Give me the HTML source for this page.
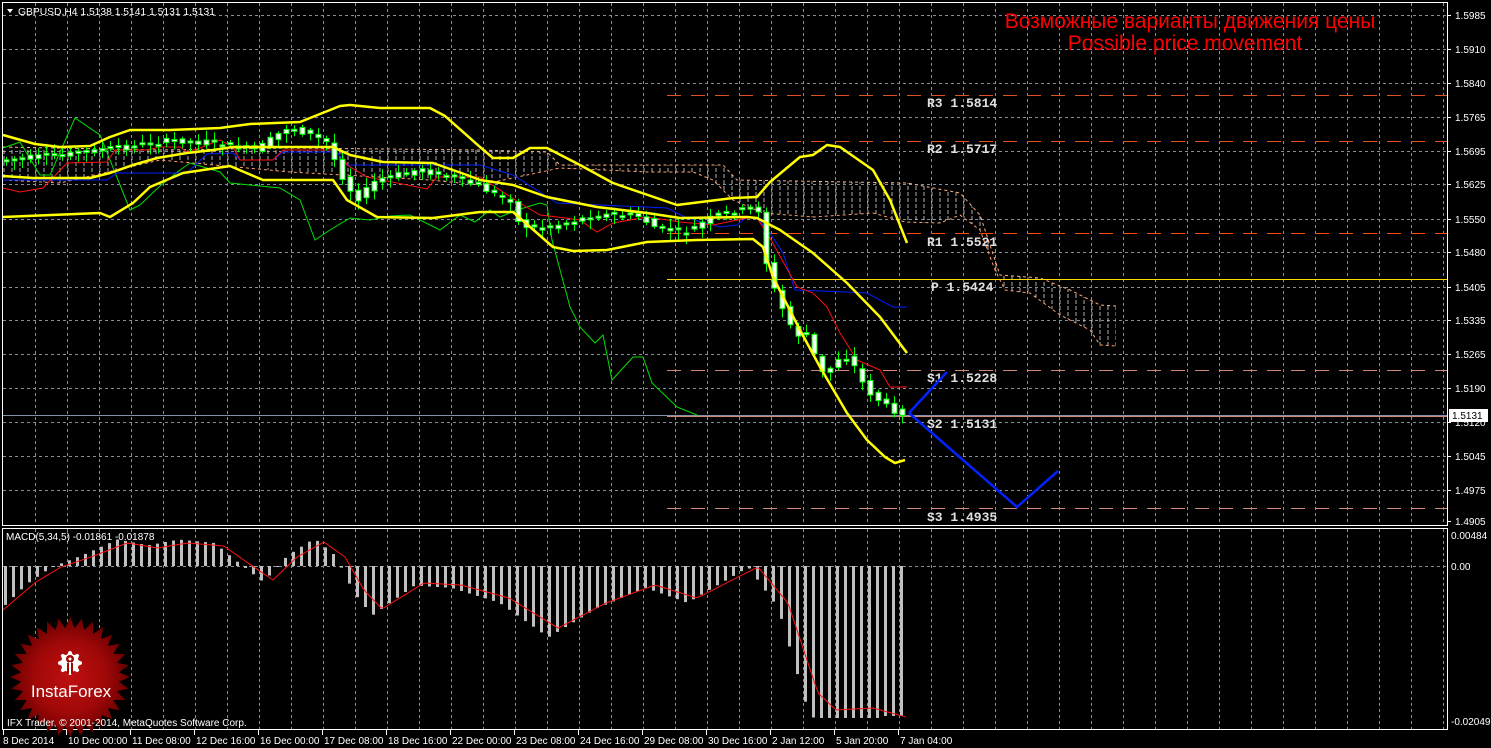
<!DOCTYPE html>
<html><head><meta charset="utf-8"><style>
html,body{margin:0;padding:0;background:#000;width:1491px;height:748px;overflow:hidden}
svg{display:block}
text{font-family:"Liberation Sans",sans-serif}
</style></head><body>
<svg id="s" width="1491" height="748" xmlns="http://www.w3.org/2000/svg">
<defs>
<pattern id="hatch" width="8" height="6" patternUnits="userSpaceOnUse"><line x1="4" y1="0" x2="4" y2="4" stroke="#ddd" stroke-width="1"/></pattern>
<radialGradient id="rg" cx="50%" cy="50%" r="50%"><stop offset="0" stop-color="#c01010"/><stop offset="0.6" stop-color="#a00808"/><stop offset="1" stop-color="#6a0000"/></radialGradient>
</defs>
<rect width="1491" height="748" fill="#000"/>
<g id="grid" stroke="#8090a0" stroke-width="1" stroke-dasharray="3,3"></g>
<g stroke="#fff" stroke-width="1" fill="none">
<rect x="2.5" y="2.5" width="1445" height="523"/>
<rect x="2.5" y="528.5" width="1445" height="201"/>
</g>
<polygon points="3,147 160,150 290,148 480,150 547,152 560,165 723,165 737,180 907,183 960,193 980,215 1000,275 1040,278 1070,290 1100,305 1116,306 1116,346 1100,345 1090,330 1060,315 1030,293 1005,290 995,270 980,230 960,215 940,223 905,222 873,213 813,217 763,213 733,200 713,180 693,172 647,172 560,168 480,185 430,180 290,172 160,160 60,183 3,180" fill="url(#hatch)" opacity="0.8"/>
<polyline points="3,147 160,150 290,148 480,150 547,152 560,165 723,165 737,180 907,183 960,193 980,215 1000,275 1040,278 1070,290 1100,305 1116,306" fill="none" stroke="#ffb080" stroke-width="1" stroke-dasharray="3,3"/>
<polyline points="3,180 60,183 160,160 290,172 430,180 480,185 560,168 647,172 693,172 713,180 733,200 763,213 813,217 873,213 905,222 940,223 960,215 980,230 995,270 1005,290 1030,293 1060,315 1090,330 1100,345 1116,346" fill="none" stroke="#ffa070" stroke-width="1" stroke-dasharray="3,3"/>
<g stroke-width="1" fill="none">
<line x1="667" y1="95.5" x2="1447" y2="95.5" stroke="#e05020" stroke-dasharray="14,10"/>
<line x1="667" y1="141.5" x2="1447" y2="141.5" stroke="#e05020" stroke-dasharray="14,10"/>
<line x1="667" y1="233.5" x2="1447" y2="233.5" stroke="#ff4a10" stroke-dasharray="14,10"/>
<line x1="667" y1="279.5" x2="1447" y2="279.5" stroke="#ffd800"/>
<line x1="667" y1="370.5" x2="1447" y2="370.5" stroke="#d08878" stroke-dasharray="14,10"/>
<line x1="3" y1="415.5" x2="1447" y2="415.5" stroke="#8090a8"/>
<line x1="667" y1="416.5" x2="1447" y2="416.5" stroke="#d08878"/>
<line x1="667" y1="508.5" x2="1447" y2="508.5" stroke="#d08878" stroke-dasharray="14,10"/>
</g>
<g font-size="13" font-weight="bold" fill="#e0e0e0">
<text x="927" y="107" style="font-family:'Liberation Mono',monospace">R3 1.5814</text>
<text x="927" y="153" style="font-family:'Liberation Mono',monospace">R2 1.5717</text>
<text x="927" y="246" style="font-family:'Liberation Mono',monospace">R1 1.5521</text>
<text x="931" y="291" style="font-family:'Liberation Mono',monospace">P 1.5424</text>
<text x="927" y="382" style="font-family:'Liberation Mono',monospace">S1 1.5228</text>
<text x="927" y="428" style="font-family:'Liberation Mono',monospace">S2 1.5131</text>
<text x="927" y="521" style="font-family:'Liberation Mono',monospace">S3 1.4935</text>
</g>
<polyline fill="none" stroke="#00e000" stroke-width="1" points="3,148 20,142 40,175 50,175 75,118 100,135 130,210 140,205 160,186 180,170 190,163 220,172 230,183 260,186 280,188 300,200 315,240 330,230 350,218 370,220 390,216 410,215 440,230 460,215 475,222 490,210 500,217 517,210 540,203 547,205 552,240 570,307 580,327 595,343 603,335 612,380 633,357 643,357 652,383 677,407 697,415"/>
<polyline fill="none" stroke="#0020ff" stroke-width="1" points="3,180 107,180 117,173 187,173 207,154 233,153 240,160 273,160 283,152 337,152 347,165 480,165 513,175 557,203 667,208 687,218 720,227 737,225 747,217 757,218 770,233 783,253 795,290 847,292 867,293 893,307 907,307"/>
<polyline fill="none" stroke="#ff1010" stroke-width="1" points="3,188 20,192 43,188 67,163 107,162 115,150 147,150 160,147 180,147 187,152 200,148 220,140 233,147 240,160 273,160 283,150 340,150 347,165 367,177 427,189 437,177 480,177 520,203 540,215 557,217 580,220 597,232 613,223 647,217 680,222 713,225 747,218 757,218 770,238 797,287 813,293 827,307 840,333 857,360 880,370 890,387 907,387"/>
<g id="candles"></g>
<g fill="none" stroke="#ffff00" stroke-width="2.5" stroke-linejoin="round">
<polyline points="3,135 35,144 60,147 90,146 110,137 130,130 170,130 220,128 250,124 300,122 340,106 350,105 380,108 430,108 445,116 480,147 493,158 513,158 530,148 547,148 580,165 613,183 677,205 733,198 757,197 770,182 800,157 813,155 827,145 840,147 873,170 890,200 907,243"/>
<polyline points="3,176 33,178 90,178 110,173 133,165 157,158 187,153 213,150 233,147 333,147 350,155 383,162 433,163 467,175 480,180 513,185 547,197 597,207 647,213 680,218 747,217 757,218 780,230 813,253 847,283 880,317 907,353"/>
<polyline points="3,217 100,213 110,217 133,203 150,187 183,173 230,166 263,180 333,180 347,200 377,217 433,218 480,212 513,212 553,247 573,251 607,250 647,242 697,240 753,239 763,247 773,277 800,330 820,367 847,413 867,440 885,457 895,463 905,460"/>
</g>
<g fill="none" stroke="#0022ff" stroke-width="2.5">
<polyline points="909,413 947,372"/>
<polyline points="909,413 1017,507 1058,471"/>
</g>
<text x="1190" y="28" font-size="21" fill="#ff0000" text-anchor="middle">Возможные варианты движения цены</text>
<text x="1185" y="50" font-size="21" fill="#ff0000" text-anchor="middle">Possible price movement</text>
<polygon points="7,9 13,9 10,13" fill="#fff"/>
<text x="18" y="15" font-size="10.3" fill="#fff">GBPUSD,H4  1.5138 1.5141 1.5131 1.5131</text>
<line x1="3" y1="566.5" x2="1447" y2="566.5" stroke="#8090a0" stroke-dasharray="3,3"/>
<g id="hist"></g>
<polyline id="sig" fill="none" stroke="#ff1010" stroke-width="1" points=""/>
<text x="6" y="540" font-size="10" fill="#fff">MACD(5,34,5) -0.01861 -0.01878</text>
<polygon id="star" fill="url(#rg)" points=""/>
<polygon id="gear" fill="#fff" points=""/>
<g fill="#a00808"><circle cx="70" cy="659" r="4"/><rect x="67" y="663" width="6" height="11"/></g>
<g fill="#fff"><rect x="69" y="662" width="2" height="12"/><circle cx="70" cy="659" r="1.5"/></g>
<text x="71" y="697" font-size="17" fill="#fff" text-anchor="middle">InstaForex</text>
<text x="7" y="726" font-size="10" fill="#fff">IFX Trader, © 2001-2014, MetaQuotes Software Corp.</text>
<g id="yaxis" font-size="10" fill="#fff"></g>
<rect x="1449" y="409" width="39" height="13" fill="#fff"/>
<text x="1452" y="419" font-size="10" fill="#000">1.5131</text>
<g id="xaxis" font-size="10" fill="#fff"></g>
</svg>
<script>
(function(){
var NS="http://www.w3.org/2000/svg";
function el(t,a,p){var e=document.createElementNS(NS,t);for(var k in a)e.setAttribute(k,a[k]);p.appendChild(e);return e;}
var gr=document.getElementById('grid');
for(var x=35.5;x<1447;x+=32){el('line',{x1:x,y1:3,x2:x,y2:525},gr);el('line',{x1:x,y1:529,x2:x,y2:729},gr);}
var ys=[[15,'1.5985'],[49,'1.5910'],[83,'1.5840'],[117,'1.5765'],[151,'1.5695'],[184,'1.5625'],[219,'1.5550'],[252,'1.5480'],[287,'1.5405'],[320,'1.5335'],[354,'1.5265'],[388,'1.5190'],[422,'1.5120'],[456,'1.5045'],[490,'1.4975'],[521,'1.4905']];
var ya=document.getElementById('yaxis');
ys.forEach(function(v){if(v[0]<520)el('line',{x1:3,y1:v[0]+.5,x2:1447,y2:v[0]+.5},gr);el('line',{x1:1447,y1:v[0]+.5,x2:1451,y2:v[0]+.5,stroke:'#fff'},ya);var t=el('text',{x:1455,y:v[0]+4},ya);t.textContent=v[1];});
[[535,'0.00484'],[566,'0.00'],[721,'-0.02049']].forEach(function(v){var t=el('text',{x:1451,y:v[0]+4},ya);t.textContent=v[1];});
var xa=document.getElementById('xaxis');
var lab=['8 Dec 2014','10 Dec 00:00','11 Dec 08:00','12 Dec 16:00','16 Dec 00:00','17 Dec 08:00','18 Dec 16:00','22 Dec 00:00','23 Dec 08:00','24 Dec 16:00','29 Dec 08:00','30 Dec 16:00','2 Jan 12:00','5 Jan 20:00','7 Jan 04:00'];
lab.forEach(function(s,i){var x=i==0?3:2+64*i;el('line',{x1:x+.5,y1:730,x2:x+.5,y2:735,stroke:'#fff'},xa);var t=el('text',{x:x+(i==0?0:2),y:744},xa);t.textContent=s;});
function interp(pts,x){if(x<=pts[0][0])return pts[0][1];for(var i=1;i<pts.length;i++){if(x<=pts[i][0]){var a=pts[i-1],b=pts[i];return a[1]+(b[1]-a[1])*(x-a[0])/(b[0]-a[0]);}}return pts[pts.length-1][1];}
var P=[[3,160],[30,158],[60,155],[100,150],[140,145],[180,140],[230,145],[260,150],[290,128],[310,133],[330,142],[345,175],[360,200],[380,180],[420,170],[450,175],[480,185],[500,195],[515,200],[523,225],[540,228],[560,225],[600,215],[640,215],[660,228],[690,232],[720,215],[755,208],[762,210],[768,255],[775,282],[782,300],[790,318],[800,335],[810,335],[820,360],[828,377],[836,365],[845,355],[855,360],[862,375],[870,390],[880,398],[888,405],[896,410],[907,413]];
var cg=document.getElementById('candles');var seed=7;function rnd(){seed=(seed*9301+49297)%233280;return seed/233280;}
for(var x=6;x<=907;x+=8){var o=interp(P,x-4)+(rnd()-.5)*6,c=interp(P,x+4)+(rnd()-.5)*6;var bt=Math.min(o,c),bb=Math.max(o,c);if(bb-bt<2)bb=bt+2;var hi=bt-2-rnd()*8,lo=bb+2+rnd()*8;
el('line',{x1:x+.5,y1:hi.toFixed(1),x2:x+.5,y2:lo.toFixed(1),stroke:'#00ff00'},cg);el('rect',{x:x-2,y:bt.toFixed(1),width:5,height:(bb-bt).toFixed(1),fill:'#fff',stroke:'#00ff00','stroke-width':1},cg);}
var S=[[3,610],[36,582],[61,567],[91,557],[127,543],[158,548],[188,543],[224,546],[248,563],[273,580],[297,557],[324,542],[345,557],[364,590],[382,609],[424,583],[461,585],[509,598],[558,628],[606,603],[655,585],[697,598],[758,567],[788,603],[818,693],[836,710],[873,708],[906,717]];
var sp='';for(var x=3;x<=906;x+=3)sp+=x+','+interp(S,x).toFixed(1)+' ';document.getElementById('sig').setAttribute('points',sp);
var hg=document.getElementById('hist');
for(var x=5;x<=907;x+=8){var v=interp(S,Math.min(x+10,906));var h=566+(v-566)*1.15;if(h>718)h=718;if(x>880)h=716;el('rect',{x:x-1,y:Math.min(h,566).toFixed(1),width:3,height:Math.max(Math.abs(h-566),1).toFixed(1),fill:'#c0c0c0'},hg);}
var st='';var n=32;for(var i=0;i<n*2;i++){var a=i*Math.PI/n;var r=i%2?49:60;st+=(70+r*Math.sin(a)).toFixed(1)+','+(677-r*Math.cos(a)).toFixed(1)+' ';}document.getElementById('star').setAttribute('points',st);
var gp='';var m=8;for(var i=0;i<m*4;i++){var a=(i-0.5)*Math.PI*2/(m*4);var r=(Math.floor(i/2)%2)?9:12;gp+=(70+r*Math.sin(a)).toFixed(1)+','+(663-r*Math.cos(a)).toFixed(1)+' ';}document.getElementById('gear').setAttribute('points',gp);
})();
</script>
</body></html>
